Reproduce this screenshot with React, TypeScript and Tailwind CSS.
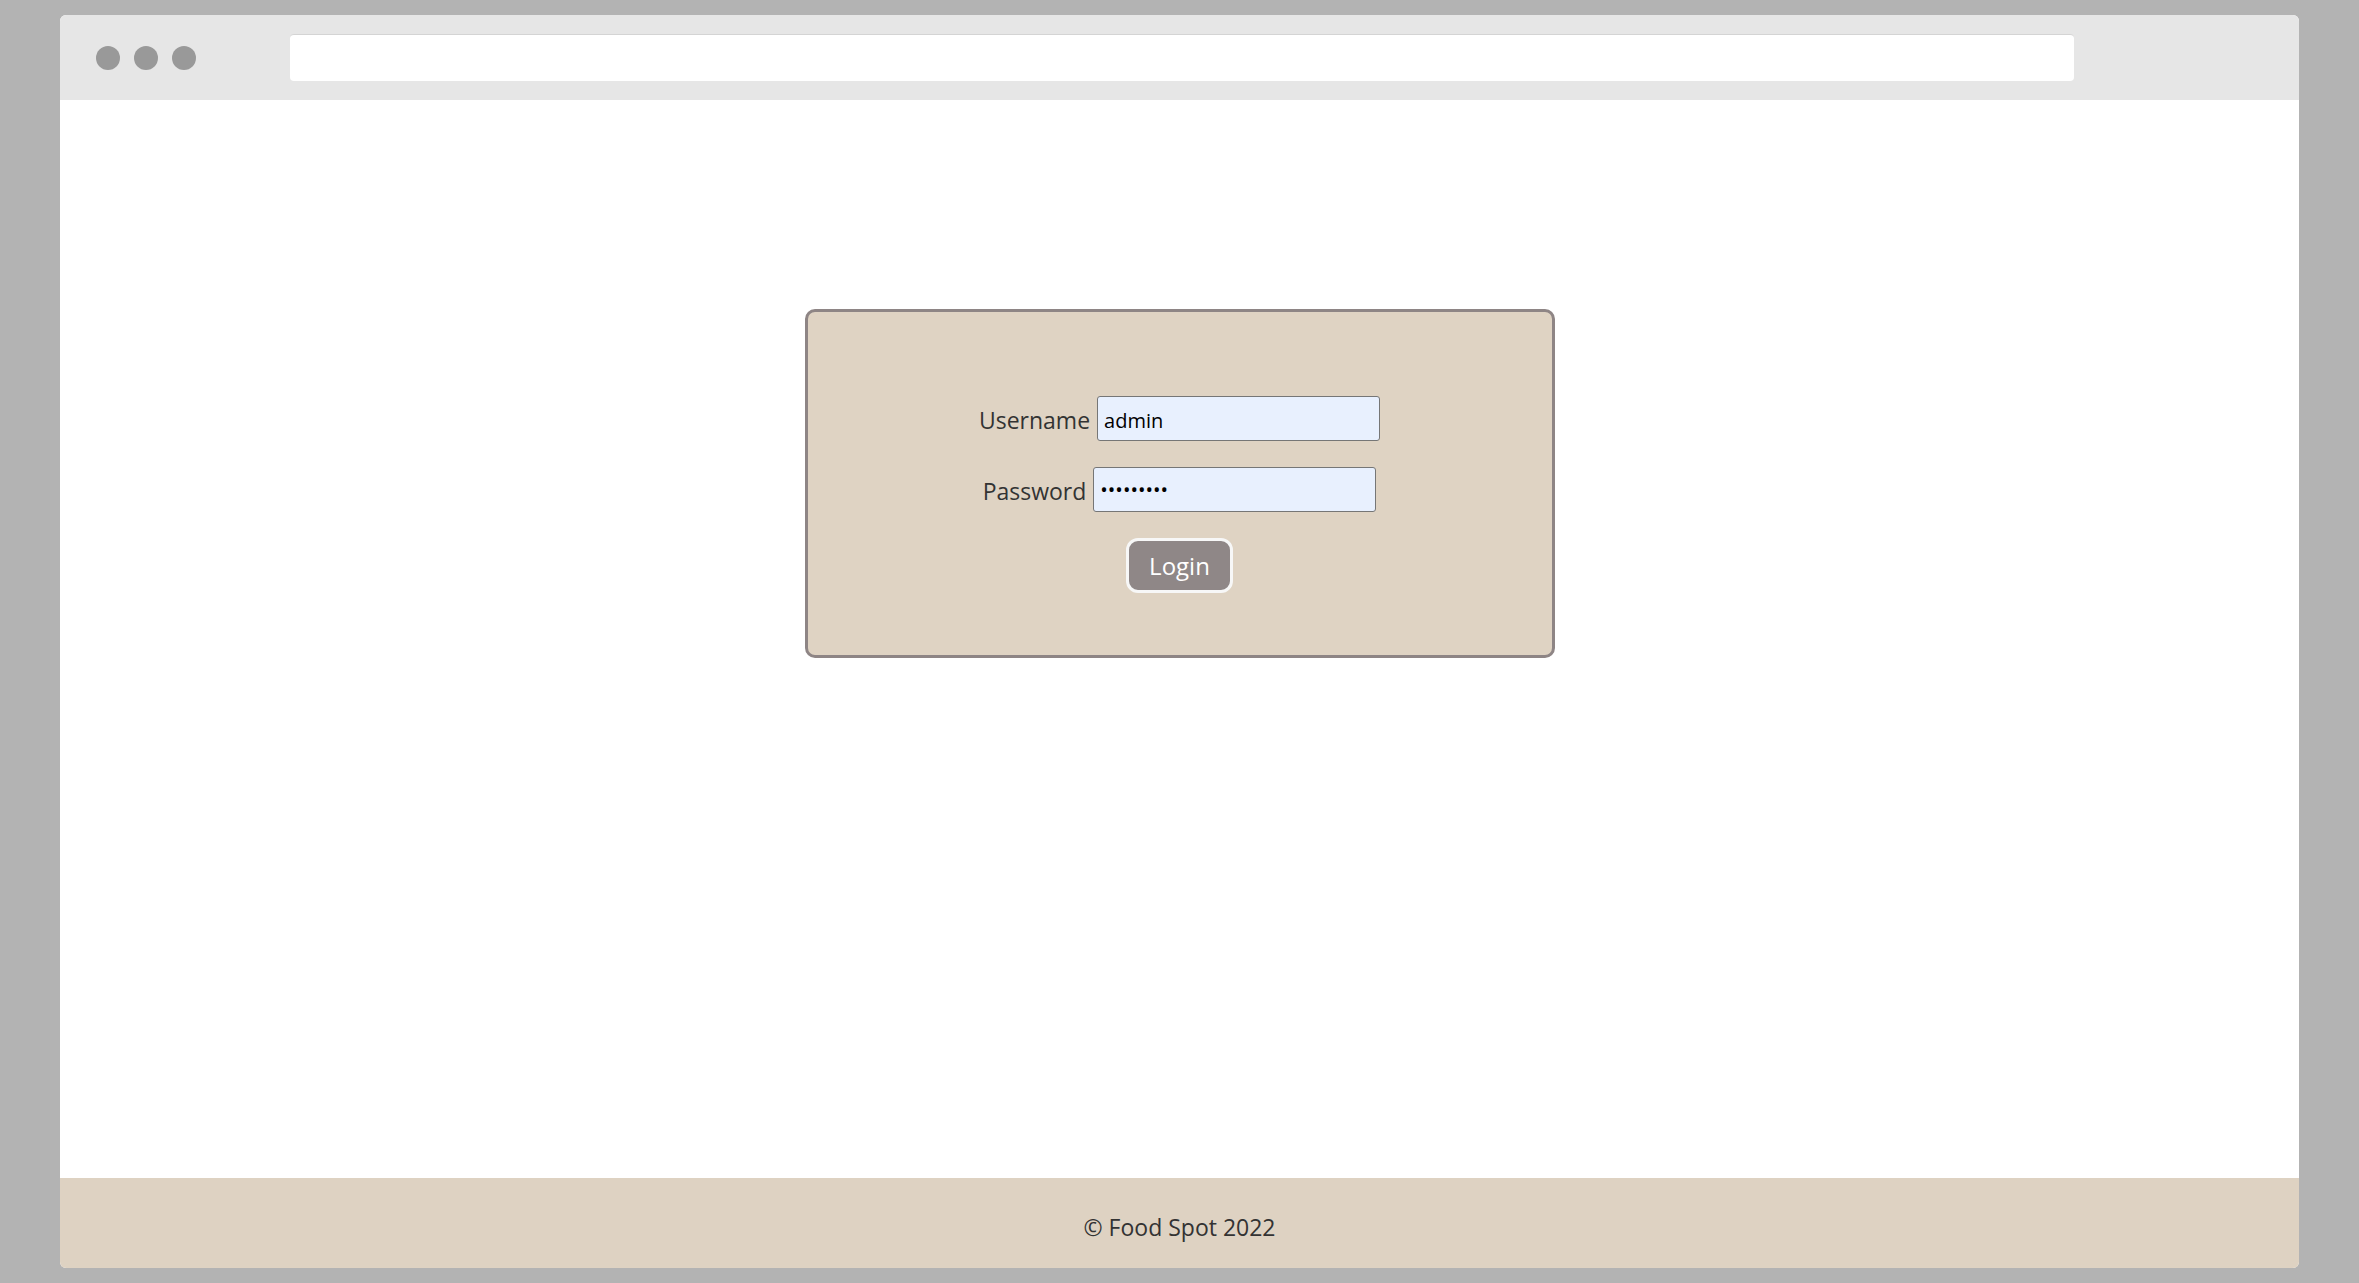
export default function App() {
	return (
		<div className="h-screen w-full bg-[#b3b3b3] px-[60px] py-[15px] font-['Open_Sans',sans-serif]">
			<div className="flex h-full flex-col overflow-hidden rounded-[6px] bg-white">
				<div className="flex h-[85px] shrink-0 items-center bg-[#e6e6e6] pl-[36px]">
					<div className="flex gap-[14px]">
						<span className="h-[24px] w-[24px] rounded-full bg-[#999999]"></span>
						<span className="h-[24px] w-[24px] rounded-full bg-[#999999]"></span>
						<span className="h-[24px] w-[24px] rounded-full bg-[#999999]"></span>
					</div>
					<div className="ml-[94px] h-[47px] w-[1784px] rounded-[4px] border-t border-[#d4d4d4] bg-white"></div>
				</div>
				<main className="flex flex-1 justify-center">
					<div className="mt-[209px] flex h-[349px] w-[750px] flex-col items-center rounded-[10px] border-[3px] border-[#8e8585] bg-[#dfd3c3] pt-[84px]">
						<div className="flex items-center gap-[7px]">
							<label className="pt-[4px] text-[23px] text-[#333333]">Username</label>
							<input
								type="text"
								defaultValue="admin"
								className="h-[45px] w-[283px] rounded-[3px] border border-[#767676] bg-[#e8f0fe] px-[6px] pt-[3px] text-[20px] text-black outline-none"
							/>
						</div>
						<div className="mt-[26px] flex items-center gap-[7px]">
							<label className="pt-[3px] text-[23px] text-[#333333]">Password</label>
							<input
								type="password"
								defaultValue="123456789"
								className="h-[45px] w-[283px] rounded-[3px] border border-[#767676] bg-[#e8f0fe] px-[6px] text-[20px] text-black outline-none"
							/>
						</div>
						<button className="mt-[26px] h-[55px] w-[107px] rounded-[12px] border-[3px] border-[#f7f7f7] bg-[#8f8787] text-[24px] text-white">
							Login
						</button>
					</div>
				</main>
				<footer className="flex h-[90px] shrink-0 items-center justify-center bg-[#ded2c2] pt-[8px] text-[23px] text-[#333333]">
					© Food Spot 2022
				</footer>
			</div>
		</div>
	);
}
